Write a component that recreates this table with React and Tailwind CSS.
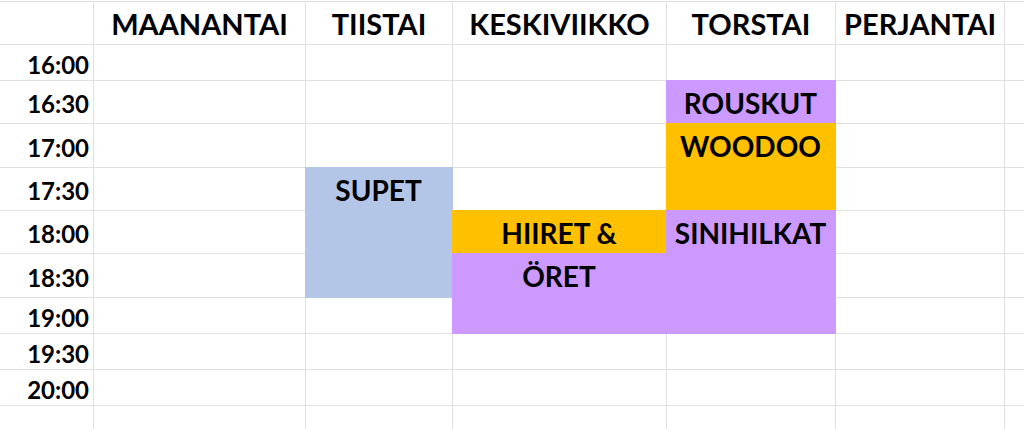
import React from 'react';

const paivat = ['MAANANTAI', 'TIISTAI', 'KESKIVIIKKO', 'TORSTAI', 'PERJANTAI'];

// täyttövärit peittävät myös vasemman ja ylemmän ruudukkoviivan
const varit = {
  sininen: 'bg-[#b4c6e7] border-[#b4c6e7] -ml-px -mt-px',
  violetti: 'bg-[#cc99ff] border-[#cc99ff] -ml-px -mt-px',
  oranssi: 'bg-[#ffc000] border-[#ffc000] -ml-px -mt-px'
};

const rivit = [
  { aika: '16:00', solut: {} },
  { aika: '16:30', solut: { 3: ['violetti', 'ROUSKUT'] } },
  { aika: '17:00', solut: { 3: ['oranssi', 'WOODOO'] } },
  { aika: '17:30', solut: { 1: ['sininen', 'SUPET'], 3: ['oranssi', ''] } },
  { aika: '18:00', solut: { 1: ['sininen', ''], 2: ['oranssi', 'HIIRET &'], 3: ['violetti', 'SINIHILKAT'] } },
  { aika: '18:30', solut: { 1: ['sininen', ''], 2: ['violetti', 'ÖRET'], 3: ['violetti', ''] } },
  { aika: '19:00', solut: { 2: ['violetti', ''], 3: ['violetti', ''] } },
  { aika: '19:30', solut: {} },
  { aika: '20:00', solut: {} },
  { aika: '', solut: {} }
];

const solu = 'border-r border-b border-[#e0e0e0] flex items-center justify-center';

export default function App() {
  return (
    <div className="w-[1024px] h-[429px] overflow-hidden bg-white font-[Lato,sans-serif] font-bold text-black">
      <div className="mt-px border-t border-[#e0e0e0]">
        <div className="grid grid-cols-[94px_212px_147px_214px_169px_169px_1fr] grid-rows-[43px_36px_43px_44px_43px_43px_44px_36px_36px_36px_36px]">
          <div className={solu} />
          {paivat.map(paiva => (
            <div key={paiva} className={`${solu} text-[29px] leading-none pt-px`}>
              {paiva}
            </div>
          ))}
          <div className="border-b border-[#e0e0e0]" />

          {rivit.map((rivi, i) => (
            <React.Fragment key={i}>
              <div className="border-r border-b border-[#e0e0e0] flex items-center justify-end pr-[4px] pt-[4px] text-[24px] leading-none">
                {rivi.aika}
              </div>
              {paivat.map((paiva, j) => {
                const s = rivi.solut[j];
                return (
                  <div
                    key={paiva}
                    className={`border-r border-b flex items-center justify-center text-[28px] leading-none pt-[2px] ${s ? varit[s[0]] : 'border-[#e0e0e0]'}`}
                  >
                    {s ? s[1] : null}
                  </div>
                );
              })}
              <div className="border-b border-[#e0e0e0]" />
            </React.Fragment>
          ))}
        </div>
      </div>
    </div>
  );
}
